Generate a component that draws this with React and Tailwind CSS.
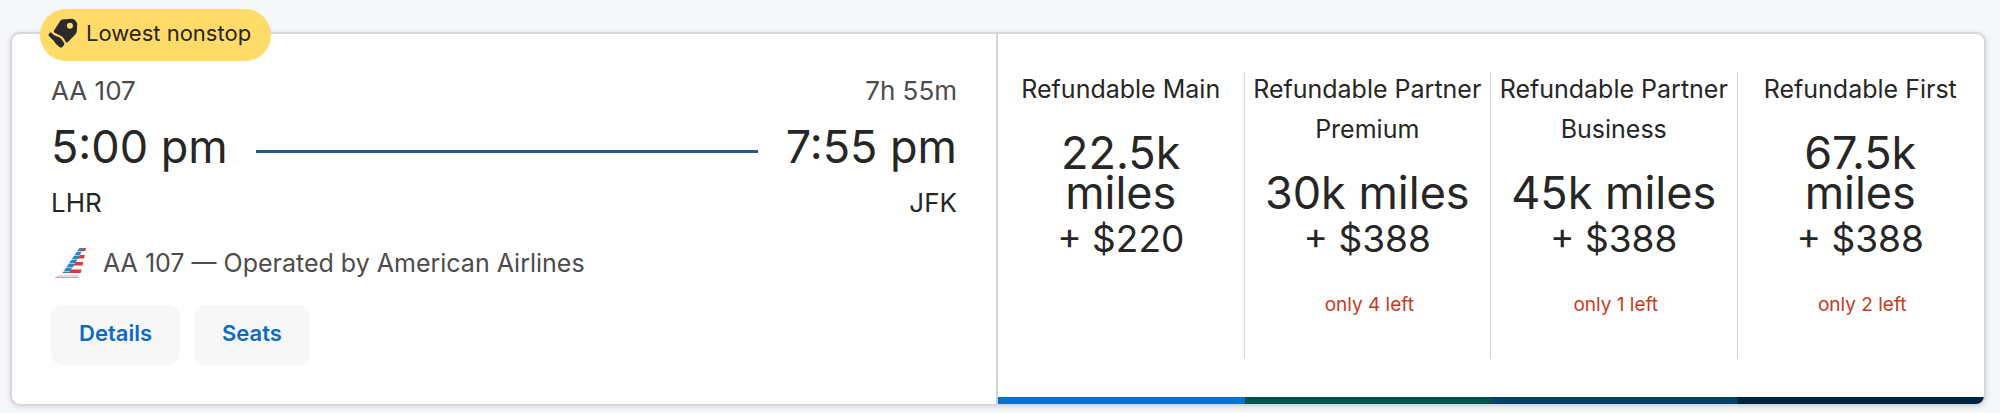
const fares = [
  { id: 'main', name: 'Refundable Main', miles: '22.5k miles', cash: '+ $220', left: null, bar: 'bg-[#0073d1]' },
  { id: 'premium', name: 'Refundable Partner Premium', miles: '30k miles', cash: '+ $388', left: 'only 4 left', bar: 'bg-[#00524f]' },
  { id: 'business', name: 'Refundable Partner Business', miles: '45k miles', cash: '+ $388', left: 'only 1 left', bar: 'bg-[#00416b]' },
  { id: 'first', name: 'Refundable First', miles: '67.5k miles', cash: '+ $388', left: 'only 2 left', bar: 'bg-[#012343]' },
];

function TagIcon() {
  return (
    <svg viewBox="0 0 30 30" className="h-[30px] w-[30px] shrink-0 text-[#2a2a2a]" aria-hidden="true">
      <path
        fill="currentColor"
        fillRule="evenodd"
        d="M14.2 1.6 23.5.7Q25.5.6 26.8 2L28.6 4.2Q29.3 5 29.2 6.5L28.8 13.3Q28.7 15 27.5 16.3L19.7 24.2Q18.7 25.1 17.8 24L16.1 21.1Q14.5 18.6 11.7 17.3L7 15.1Q5 14.1 6 12.4L12.2 3.1Q13 1.8 14.2 1.6ZM21.9 4.7A3 3 0 1 0 21.9 10.7 3 3 0 0 0 21.9 4.7Z"
      />
      <path
        fill="currentColor"
        d="M2.2 14.4Q3.1 14.2 4 15.2 5.4 16.8 7.5 17.7L10.8 19.1Q13 20.1 14.2 22L15.9 24.8Q16.8 26.4 15.4 27.8L14 29.2Q12.8 30.1 11.5 29.1L7.9 26.1 6.2 23.3 1.1 18.3Q.2 17.3.6 16.2Z"
      />
    </svg>
  );
}

function TailLogo() {
  return (
    <svg viewBox="0 0 32 32" className="h-8 w-8 shrink-0" aria-hidden="true">
      <path fill="#dcdcdf" d="M2.5 28H24L23 31H0Z" />
      <path fill="#e59a9e" d="M.8 30H23.3L23 31H0Z" />
      <path fill="#f7f7f8" d="M24 1H31L25 27H4Z" />
      <path fill="#d93a3f" d="M26 1H31L30.3 4H25ZM22 8H29.8L29 11.5H20.5ZM18 15H28.2L27.5 18.5H16.5ZM14 22.5H26.5L25.7 26H12Z" />
      <path fill="#2b86bd" d="M24.5 1H28L26.8 4H22.4ZM21.7 5H26.3L24.9 8H19.7ZM19 9H24.4L22.8 12H17ZM16.3 13H22.2L20.4 16H14.3ZM13.6 17H19.8L17.9 20H11.6ZM10.9 21H17.2L15.1 24H8.9ZM8.1 25H14.3L13.5 26H7.4Z" />
      <path fill="#9dcbe3" d="M22.4 4H26.8L26.3 5H21.7ZM19.7 8H24.9L24.4 9H19ZM17 12H22.8L22.2 13H16.3ZM14.3 16H20.4L19.8 17H13.6ZM11.6 20H17.9L17.2 21H10.9ZM8.9 24H15.1L14.3 25H8.1Z" />
    </svg>
  );
}

function Fare({ fare, last }) {
  return (
    <div className="flex min-w-0 flex-col">
      <div className={`flex flex-1 flex-col items-center border-r text-center ${last ? 'border-transparent' : 'border-[#d0d2d3]'}`}>
        <h3 className="-mt-[3px] px-1 text-[25px] leading-10">{fare.name}</h3>
        <p className="mt-6 px-3 text-[45px] leading-10">{fare.miles}</p>
        <p className="text-[37px] leading-[52px]">{fare.cash}</p>
        {fare.left && <p className="mt-[26px] pl-1 text-[19px] leading-7 text-[#c43b1d]">{fare.left}</p>}
      </div>
      <div className={`mt-[38px] h-[7px] ${fare.bar}`} />
    </div>
  );
}

export default function App() {
  return (
    <main className="bg-[#f5f7fa] pt-8 pr-[14px] pb-[9px] pl-[10px] font-['Inter','Liberation_Sans',sans-serif] text-[#262626]">
      <article className="relative grid grid-cols-2 rounded-[10px] border-2 border-[#d6d8da] bg-white shadow-[0_1px_6px_rgba(0,0,0,0.12)]">
        <div className="absolute -top-[25px] left-7 flex h-[52px] items-center gap-2 rounded-full bg-[#ffdb69] pr-5 pb-1 pl-2 text-[22px]">
          <TagIcon />
          <span>Lowest nonstop</span>
        </div>

        <section className="flex min-w-0 flex-col border-r-2 border-[#d0d2d3] px-[39px] pt-[41px] pb-[39px]">
          <div className="flex justify-between text-[26px] leading-8 text-[#4c4c4c]">
            <span>AA 107</span>
            <span>7h 55m</span>
          </div>
          <div className="mt-3 flex items-center gap-7 text-[45px] leading-[56px]">
            <span>5:00 pm</span>
            <div className="mt-2 h-[3px] flex-1 bg-[#24588f]" />
            <span>7:55 pm</span>
          </div>
          <div className="mt-3 flex justify-between text-[26px] leading-8">
            <span>LHR</span>
            <span>JFK</span>
          </div>
          <div className="mt-7 flex items-center gap-4 pl-1 text-[25px] leading-8 text-[#4c4c4c]">
            <TailLogo />
            <span>AA 107 — Operated by American Airlines</span>
          </div>
          <div className="mt-[26px] flex gap-[14px] text-[22px] font-semibold text-[#0a6cc4]">
            <button type="button" className="h-[60px] rounded-xl bg-[#f7f7f7] px-7 pb-1">Details</button>
            <button type="button" className="h-[60px] rounded-xl bg-[#f7f7f7] px-7 pb-1">Seats</button>
          </div>
        </section>

        <section className="grid min-w-0 grid-cols-4 overflow-hidden rounded-r-lg pt-[38px]">
          {fares.map((fare, i) => (
            <Fare key={fare.id} fare={fare} last={i === fares.length - 1} />
          ))}
        </section>
      </article>
    </main>
  );
}
